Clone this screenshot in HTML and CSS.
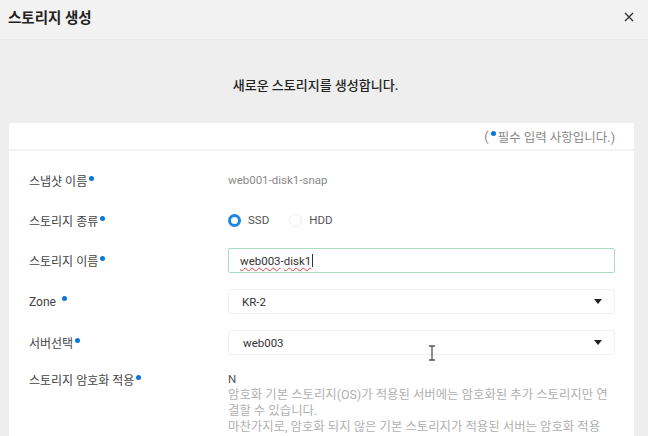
FILE: index.html
```html
<!DOCTYPE html>
<html lang="ko">
<head>
<meta charset="utf-8">
<title>스토리지 생성</title>
<link rel="stylesheet" href="styles.css">
</head>
<body>
<header class="topbar">
  <h1 class="title">스토리지 생성</h1>
  <span class="close">
    <svg width="10" height="10" viewBox="0 0 10 10"><path d="M1 1 L9 9 M9 1 L1 9" stroke="#333" stroke-width="1.4" fill="none"/></svg>
  </span>
</header>
<main class="content">
  <p class="intro">새로운 스토리지를 생성합니다.</p>
  <section class="card">
    <div class="card-head">(<span class="dot"></span>필수 입력 사항입니다.)</div>
    <div class="card-body">
      <div class="row">
        <div class="label">스냅샷 이름<span class="dot sup"></span></div>
        <div class="value muted">web001-disk1-snap</div>
      </div>
      <div class="row">
        <div class="label">스토리지 종류<span class="dot sup"></span></div>
        <div class="value radios">
          <span class="radio on"></span><span class="radio-text">SSD</span>
          <span class="radio"></span><span class="radio-text">HDD</span>
        </div>
      </div>
      <div class="row">
        <div class="label">스토리지 이름<span class="dot sup"></span></div>
        <div class="value">
          <div class="input"><span class="spell">web003</span>-<span class="spell">disk1</span><span class="caret"></span></div>
        </div>
      </div>
      <div class="row">
        <div class="label">Zone <span class="dot sup sp"></span></div>
        <div class="value">
          <div class="select"><span>KR-2</span><span class="arrow"></span></div>
        </div>
      </div>
      <div class="row">
        <div class="label">서버선택<span class="dot sup"></span></div>
        <div class="value">
          <div class="select"><span class="pad1">web003</span><span class="arrow"></span></div>
        </div>
      </div>
      <div class="row top">
        <div class="label">스토리지 암호화 적용<span class="dot sup"></span></div>
        <div class="value desc">
          <div class="n">N</div>
          <div class="help">암호화 기본 스토리지(OS)가 적용된 서버에는 암호화된 추가 스토리지만 연결할 수 있습니다.</div>
          <div class="help">마찬가지로, 암호화 되지 않은 기본 스토리지가 적용된 서버는 암호화 적용되지 않은 추가 스토리지만 연결할 수 있습니다.</div>
        </div>
      </div>
    </div>
  </section>
  <svg class="ibeam" width="8" height="16" viewBox="0 0 8 16"><path d="M1 1 H7 M4 1 V15 M1 15 H7" stroke="#555" stroke-width="1.3" fill="none"/></svg>
</main>
</body>
</html>
```

FILE: styles.css
```css
* { box-sizing: border-box; }
html, body { margin: 0; padding: 0; }
body {
  width: 648px;
  height: 436px;
  overflow: hidden;
  background: #eeeeee;
  font-family: Roboto, "Noto Sans CJK KR", sans-serif;
  color: #333;
}
.topbar {
  height: 40px;
  background: #f2f2f2;
  border-bottom: 1px solid #e8e8e8;
  display: flex;
  align-items: center;
  justify-content: space-between;
  padding: 0 14px 0 8px;
}
.title {
  margin: 0;
  font-size: 14.5px;
  font-weight: 700;
  color: #222;
  margin-top: -6px;
}
.close { display: flex; margin-top: -6px; }
.content { position: relative; padding: 0 14px 0 9px; }
.intro {
  margin: 0;
  height: 83px;
  padding-top: 38px;
  padding-right: 12px;
  text-align: center;
  font-size: 13px;
  font-weight: 500;
  color: #222;
  line-height: 16px;
}
.card {
  background: #fff;
  border-radius: 2px;
  height: 400px;
}
.card-head {
  height: 28px;
  display: flex;
  align-items: center;
  justify-content: flex-end;
  padding-right: 19px;
  font-size: 12.5px;
  color: #888;
  border-bottom: 2px solid #f3f3f3;
}
.dot {
  display: inline-block;
  width: 5px;
  height: 5px;
  border-radius: 50%;
  background: #0b76d6;
  margin: 0 2px 0 2px;
  position: relative;
  top: -3px;
}
.dot.sup { top: -5px; margin-left: 2px; }
.dot.sp { margin-left: 3px; }
.card-body {
  padding: 17px 19px 0 20px;
  display: flex;
  flex-direction: column;
  gap: 16px;
}
.row {
  display: flex;
  align-items: center;
  min-height: 24px;
}
.row.top { align-items: flex-start; }
.label {
  width: 199px;
  flex: none;
  font-size: 12px;
  color: #444;
}
.value {
  flex: 1;
  font-size: 11.5px;
  color: #333;
}
.muted { color: #8a8a8a; }
.radios { display: flex; align-items: center; }
.radio {
  width: 13px;
  height: 13px;
  border-radius: 50%;
  border: 1px solid #ececec;
  background: #fff;
  flex: none;
}
.radio.on { border: 3.5px solid #1a86e0; }
.radio-text { margin: 0 20px 0 7px; color: #555; }
.input {
  height: 25px;
  border: 1px solid #a9dcc0;
  border-radius: 2px;
  display: flex;
  align-items: center;
  padding-left: 11px;
  color: #333;
}
.spell {
  text-decoration: underline wavy #e04040;
  text-decoration-thickness: 1px;
  text-underline-offset: 2px;
}
.caret {
  width: 1px;
  height: 13px;
  background: #333;
  margin-left: 1px;
}
.select {
  height: 25px;
  border: 1px solid #f0f0f0;
  border-radius: 3px;
  display: flex;
  align-items: center;
  justify-content: space-between;
  padding: 0 12px 0 13px;
  color: #333;
}
.pad1 { padding-left: 1px; }
.arrow {
  width: 0;
  height: 0;
  border-left: 4px solid transparent;
  border-right: 4px solid transparent;
  border-top: 5px solid #222;
}
.desc { line-height: 16px; font-size: 12.4px; }
.n { color: #555; font-size: 11.5px; }
.help { color: #b0b0b0; padding-right: 4px; }
.ibeam { position: absolute; left: 428px; top: 305px; }
```
